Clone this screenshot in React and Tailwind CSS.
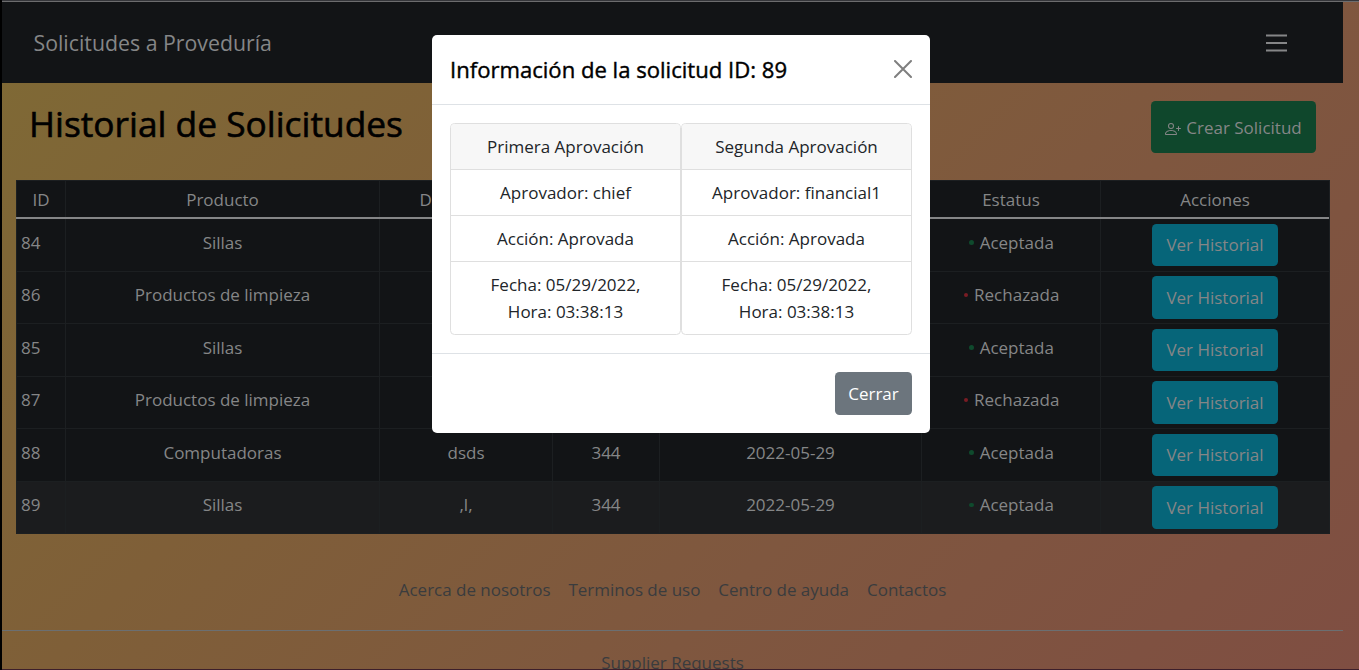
import { BsPersonPlus } from "react-icons/bs";

const rows = [
  { id: 84, product: "Sillas", accepted: true },
  { id: 86, product: "Productos de limpieza", accepted: false },
  { id: 85, product: "Sillas", accepted: true },
  { id: 87, product: "Productos de limpieza", accepted: false },
  { id: 88, product: "Computadoras", description: "dsds", amount: 344, date: "2022-05-29", accepted: true },
  { id: 89, product: "Sillas", description: ",l,", amount: 344, date: "2022-05-29", accepted: true },
];

const headers = ["ID", "Producto", "Descripción", "", "", "Estatus", "Acciones"];

const approvals = [
  { title: "Primera Aprovación", approver: "chief" },
  { title: "Segunda Aprovación", approver: "financial1" },
];

const columns = "grid grid-cols-[49px_314px_173px_107px_262px_179px_230px]";

function Navbar() {
  return (
    <nav className="flex h-[81px] w-[1341px] shrink-0 items-center justify-between bg-[#121416] pr-14 pl-[31.5px]">
      <span className="text-[21.3px] text-[#858687]">Solicitudes a Proveduría</span>
      <svg className="h-[18px] w-[21px]" viewBox="0 0 21 18" stroke="#858687" strokeWidth="2.2">
        <path d="M0 1.5h21M0 9h21M0 16.5h21" />
      </svg>
    </nav>
  );
}

function Cell({ children, className = "" }) {
  return <div className={`border-l border-[#1c1f21] text-center last:pr-px ${className}`}>{children}</div>;
}

function HistoryTable() {
  return (
    <div className="ml-[14px] w-[1314px] shrink-0 border-r border-[#1c1f21] bg-[#121416] text-[#858687]">
      <div className={`${columns} h-[39px] border-t border-b-2 border-t-[#1c1f21] border-b-[#858687] leading-[38px]`}>
        {headers.map((header, index) => (
          <Cell key={index} className="h-9">
            {header}
          </Cell>
        ))}
      </div>
      {rows.map((row) => (
        <div
          key={row.id}
          className={`${columns} h-[52.5px] border-b border-[#1c1f21] leading-[27px] last:bg-[#1b1c1e]`}
        >
          <Cell className="pt-[9.9px] pl-1 text-left!">{row.id}</Cell>
          <Cell className="pt-[9.9px]">{row.product}</Cell>
          <Cell className="pt-[9.9px]">{row.description}</Cell>
          <Cell className="pt-[9.9px]">{row.amount}</Cell>
          <Cell className="pt-[9.9px]">{row.date}</Cell>
          <Cell className="flex items-start justify-center gap-1.5 pt-[9.9px] pl-px">
            <i className={`mt-[11.5px] size-[4.5px] rounded-full ${row.accepted ? "bg-[#0f4a2d]" : "bg-[#7a1c24]"}`} />
            {row.accepted ? "Aceptada" : "Rechazada"}
          </Cell>
          <Cell className="pt-[4.5px]">
            <button className="h-[42.5px] w-[126px] rounded-[4.5px] bg-[#066579] text-[#858687]">
              Ver Historial
            </button>
          </Cell>
        </div>
      ))}
    </div>
  );
}

function Footer() {
  return (
    <footer className="mt-[42px] w-[1341px] text-[#3a3c3e]">
      <div className="flex justify-center gap-[18px] leading-[27px] tracking-[-0.02px]">
        <span>Acerca de nosotros</span>
        <span>Terminos de uso</span>
        <span>Centro de ayuda</span>
        <span>Contactos</span>
      </div>
      <div className="mt-[27px] border-t border-[#6b6f72] pt-[18px] text-center leading-[27px]">
        Supplier Requests
      </div>
    </footer>
  );
}

function ApprovalCard({ title, approver }) {
  return (
    <div className="w-[231px] overflow-hidden rounded-[4.5px] border border-[#dfdfdf] text-center leading-[27px] text-[#212529]">
      <div className="h-[46px] border-b border-[#dfdfdf] bg-[#f7f7f7] pt-[9px]">{title}</div>
      <div className="h-[46px] border-b border-[#dfdfdf] pt-[9px]">Aprovador: {approver}</div>
      <div className="h-[46px] border-b border-[#dfdfdf] pt-[9px]">Acción: Aprovada</div>
      <div className="h-[72px] px-[18px] pt-[9px]">
        Fecha: 05/29/2022,
        <br />
        Hora: 03:38:13
      </div>
    </div>
  );
}

function Modal() {
  return (
    <div className="absolute top-[35px] left-[430px] h-[398px] w-[498px] rounded-[5px] bg-white">
      <header className="flex h-[70px] items-center justify-between border-b border-[#dee2e6] px-[18px]">
        <h5 className="text-[22.1px] text-black [-webkit-text-stroke:0.4px]">Información de la solicitud ID: 89</h5>
        <svg className="mb-0.5 size-[18px]" viewBox="0 0 18 18" stroke="#7f7f7f" strokeWidth="2" strokeLinecap="round">
          <path d="M1 1l16 16M17 1L1 17" />
        </svg>
      </header>
      <div className="flex px-[18px] py-[18px]">
        {approvals.map((approval) => (
          <ApprovalCard key={approval.title} {...approval} />
        ))}
      </div>
      <footer className="flex justify-end border-t border-[#dee2e6] px-[18px] pt-[18px]">
        <button className="h-[43px] w-[77px] rounded-[4.5px] bg-[#6c757d] text-white">Cerrar</button>
      </footer>
    </div>
  );
}

export default function App() {
  return (
    <div className="relative flex h-[670px] w-[1359px] flex-col overflow-hidden border-l-2 border-black bg-linear-[135deg,#7f6a35,#7f5f38_35%,#7f573f_65%,#7f4e42] font-['Open_Sans','Noto_Sans',sans-serif] text-[17px]">
      <div className="h-0.5 shrink-0 border-b border-[#6c6c6e] bg-[#35363a]" />
      <Navbar />
      <div className="flex h-[97px] w-[1341px] shrink-0 items-start justify-between pr-[27px] pl-[27px]">
        <h1 className="mt-[19px] text-[35.3px] leading-[43px] text-black [-webkit-text-stroke:0.6px]">
          Historial de Solicitudes
        </h1>
        <button className="mt-[18px] flex h-[52px] w-[165px] items-center justify-center gap-[5px] rounded-[4.5px] bg-[#0f472c] pt-px text-[#858687]">
          <BsPersonPlus className="mt-0.5 size-4" />
          Crear Solicitud
        </button>
      </div>
      <HistoryTable />
      <Footer />
      <div className="absolute inset-x-0 bottom-0 h-px bg-[#3d1f2b]" />
      <Modal />
    </div>
  );
}
